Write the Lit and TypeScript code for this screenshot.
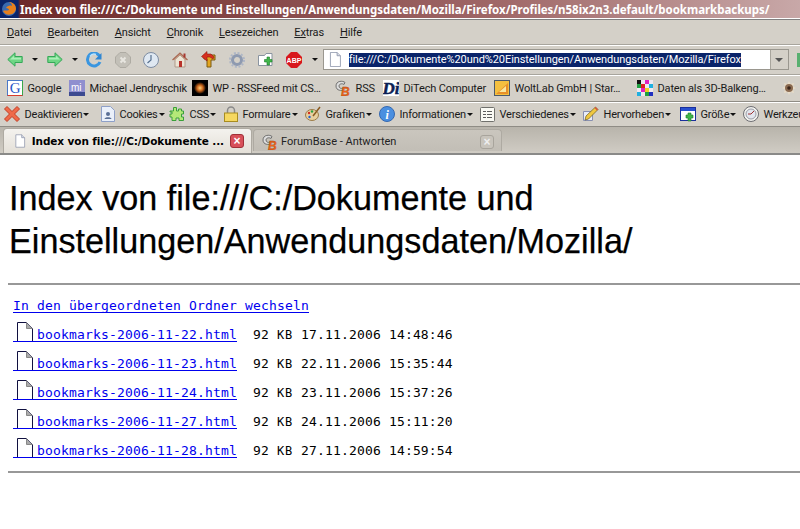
import { LitElement, html, css } from "lit";
import { customElement } from "lit/decorators.js";

const dd = html`<span class="dd"></span>`;
const page = (w = 16, h = 18) => html`<svg width=${w} height=${h} viewBox="0 0 16 18"><path d="M2.500.5h8l4 4v13h-12z" fill="#fff" stroke="#8a93a8"/><path d="M10.500.5v4h4" fill="#d8dce6" stroke="#8a93a8"/></svg>`;
const cb = html`<svg width="16" height="16" viewBox="0 0 16 16"><path d="M10 2.500C8 .5 1 .5 1 6c0 5 6 5 8 3.500L8 8C6 9 4 8 4 6s3-3 5-1.500z" fill="#ddd" stroke="#555" stroke-width=".8"/><text x="6" y="15.500" font-family="Liberation Sans" font-weight="700" font-style="italic" font-size="12" fill="#ec6518" stroke="#a33c10" stroke-width=".3">B</text></svg>`;

const arrow = (flip: boolean) => html`<svg width="16" height="15" viewBox="0 0 16 15" style=${flip ? "transform:scaleX(-1)" : ""}><path d="M.8 7.500 8 .8v3.700h7.200v6H8v3.700z" fill="#6ed684" stroke="#35a858"/><path d="M3 7.500 7 3.800v2h7v1.700H5z" fill="#aaefb8"/></svg>`;

const mi = html`<svg width="16" height="16" viewBox="0 0 16 16"><rect width="16" height="16" fill="#8f8fcf"/><rect y="12" width="16" height="4" fill="#3c4a90"/><text x="2" y="10.500" font-family="Liberation Sans" font-size="10" fill="#fff">mi</text></svg>`;

const navIcons = [
  html`<svg width="16" height="16" viewBox="0 0 16 16"><path d="M13.500 4A6.500 6.500 0 1 0 14 10" fill="none" stroke="#3a96e0" stroke-width="3"/><path d="M4 4.500A5 5 0 0 1 10 2.500" fill="none" stroke="#bfe4fb" stroke-width="1.500"/><path d="M15.500 1v6.500H9z" fill="#2f86d2"/></svg>`,
  html`<svg width="16" height="16" viewBox="0 0 16 16"><path d="M5 .5h6L15.500 5v6L11 15.500H5L.5 11V5z" fill="#c3c0b8" stroke="#aeaba3"/><path d="m5.500 5.500 5 5m0-5-5 5" stroke="#e8e6e0" stroke-width="2"/></svg>`,
  html`<svg width="16" height="16" viewBox="0 0 16 16"><circle cx="8" cy="8" r="7.500" fill="#dfe8f2" stroke="#7d8ca2"/><path d="M8 3v5l-3.500 3" fill="none" stroke="#56708e" stroke-width="1.200"/></svg>`,
  html`<svg width="16" height="16" viewBox="0 0 16 16"><path d="M.5 8 8 1l7.500 7" fill="#cf9a82" stroke="#a86a55" stroke-width="1.200"/><path d="M3 7.500 8 3l5 4.500V15H3z" fill="#ece4d4" stroke="#b09a8a"/><rect x="7" y="9" width="3" height="6" fill="#b8322a"/><rect x="11.500" y="1.500" width="2" height="4" fill="#a83830"/></svg>`,
  html`<svg width="16" height="17" viewBox="0 0 16 17"><path d="M6 16V8H3V4h11v5H10v7z" fill="#e3a520" stroke="#7a5a12"/><path d="M.5 5.500 6 .5V3h4l3 3-1 2-3-2H6v4z" fill="#d7301f" stroke="#8d1d12" stroke-width=".6"/></svg>`,
  html`<svg width="16" height="16" viewBox="0 0 16 16"><circle cx="8" cy="8" r="4.500" fill="none" stroke="#8e9ab0" stroke-width="3"/><circle cx="8" cy="8" r="7" fill="none" stroke="#aeb6c6" stroke-width="2" stroke-dasharray="2 1.700"/></svg>`,
  html`<svg width="16" height="15" viewBox="0 0 16 15"><path d="M.5 3.500h6l1.500-2h6v12H.5z" fill="#fff" stroke="#8a94a0"/><path d="M9 5h2.500v2.500H14V10h-2.500v3H9v-3H6.500V7.500H9z" fill="#41b64a" stroke="#1d7d2a" stroke-width=".6"/></svg>`,
];
const abp = html`<svg width="16" height="16" viewBox="0 0 16 16"><path d="M5 0h6l5 5v6l-5 5H5l-5-5V5z" fill="#d8171c"/><text x="8" y="10.800" text-anchor="middle" font-family="Liberation Sans" font-weight="700" font-size="7" fill="#fff">ABP</text></svg>`;

const bookmarks: [unknown, string, number][] = [
  [html`<svg width="16" height="16" viewBox="0 0 16 16"><rect x=".5" y=".5" width="15" height="15" fill="#fff" stroke="#4a78c8"/><path d="M15.500 .5v15" stroke="#38a84a"/><path d="M.5 15.500h15" stroke="#d83c2c"/><text x="8" y="13" text-anchor="middle" font-family="Liberation Serif" font-size="15" fill="#2a56c8">G</text></svg>`, "Google", 62],
  [mi, "Michael Jendryschik", 123],
  [html`<svg width="16" height="16" viewBox="0 0 16 16"><defs><radialGradient id="sun"><stop offset="0" stop-color="#ffd27a"/><stop offset=".5" stop-color="#c8641a"/><stop offset="1" stop-color="#000"/></radialGradient></defs><rect width="16" height="16" fill="#000"/><circle cx="8" cy="8" r="6" fill="url(#sun)"/></svg>`, "WP - RSSFeed mit CS…", 143],
  [cb, "RSS", 48],
  [html`<svg width="16" height="16" viewBox="0 0 16 16"><rect width="16" height="16" fill="#fff"/><text x="-.5" y="14" font-family="Liberation Serif" font-weight="700" font-style="italic" font-size="17" fill="#0c1f55" stroke="#0c1f55" stroke-width=".5">Di</text></svg>`, "DiTech Computer", 111],
  [html`<svg width="16" height="16" viewBox="0 0 16 16"><rect x=".5" y=".5" width="15" height="15" fill="#f4c040" stroke="#4c5a6a"/><path d="M2 14 14 3v11z" fill="#e89028"/><path d="M5 12 12 6v6z" fill="#f8e8a0"/></svg>`, "WoltLab GmbH | Star…", 143],
  [html`<svg width="16" height="16" viewBox="0 0 16 16"><rect width="16" height="16" fill="#f0e8f0"/><path d="M0 0h4v4H0z" fill="#111"/><path d="M8 0h4v4H8zM4 8h4v4H4z" fill="#e020c0"/><path d="M12 4h4v4h-4zM0 12h4v4H0z" fill="#20b0e0"/><path d="M4 4h4v4H4z" fill="#e02020"/><path d="M8 8h4v4H8z" fill="#f0d020"/><path d="M0 4h4v4H0zM8 12h4v4H8z" fill="#20a040"/><path d="M12 12h4v4h-4z" fill="#2030c0"/></svg>`, "Daten als 3D-Balkeng…", 144],
  [html`<svg width="16" height="16" viewBox="0 0 16 16"><path d="M8 1 9.500 4 13 3l-1 3.500L15 8l-3 1.500L13 13l-3.500-1L8 15l-1.500-3L3 13l1-3.500L1 8l3-1.500L3 3l3.500 1z" fill="#e8dcc8"/><circle cx="8" cy="8" r="4" fill="#8a6a50"/><circle cx="8" cy="8" r="1.800" fill="#3a2418"/></svg>`, "", 19],
];

const dev: [unknown, string, boolean, number][] = [
  [html`<svg width="16" height="16" viewBox="0 0 16 16"><path d="M3 .5 8 5.500l5-5L15.500 3l-5 5 5 5-2.500 2.500-5-5-5 5L.5 13l5-5-5-5z" fill="#ef6a4a" stroke="#c23c22"/></svg>`, "Deaktivieren", true, 97],
  [html`<svg width="14" height="16" viewBox="0 0 14 16"><path d="M.5.500h9l4 4v11H.5z" fill="#eaf0fa" stroke="#8ea0c8"/><circle cx="7" cy="8" r="2" fill="#5a6f95"/><path d="M3.500 13c0-2.500 7-2.500 7 0z" fill="#5a6f95"/></svg>`, "Cookies", true, 68],
  [html`<svg width="16" height="16" viewBox="0 0 16 16"><path d="M1 5h3.500V1.500h3V5h2V3h3v2h2v3h-2v3h2v3.500H10V12H7v2.500H3V11H1V8h2V6H1z" fill="#b4e878" stroke="#3aa03a"/></svg>`, "CSS", true, 55],
  [html`<svg width="14" height="16" viewBox="0 0 14 16"><path d="M3.500 7V4.500a3.500 3.500 0 0 1 7 0V7" fill="none" stroke="#8a8a8a" stroke-width="1.500"/><rect x=".5" y="7" width="13" height="8.500" fill="#f6d860" stroke="#a88c20"/></svg>`, "Formulare", true, 81],
  [html`<svg width="16" height="16" viewBox="0 0 16 16"><ellipse cx="7" cy="9" rx="6.500" ry="5.500" fill="#e8d0a0" stroke="#9c7c48"/><circle cx="4" cy="7" r="1.200" fill="#d03020"/><circle cx="7" cy="5.500" r="1.200" fill="#2aa040"/><circle cx="4.500" cy="11" r="1.200" fill="#2060d0"/><path d="M15 1 8 10" stroke="#8a5a20" stroke-width="1.500"/></svg>`, "Grafiken", true, 74],
  [html`<svg width="16" height="16" viewBox="0 0 16 16"><circle cx="8" cy="8" r="7.500" fill="#4a8fe0" stroke="#3468b0"/><text x="8" y="12.500" text-anchor="middle" font-family="Liberation Serif" font-weight="700" font-style="italic" font-size="12" fill="#fff">i</text></svg>`, "Informationen", true, 101],
  [html`<svg width="15" height="15" viewBox="0 0 15 15"><rect x=".5" y=".5" width="14" height="14" rx="1" fill="#fafaf4" stroke="#70706c"/><path d="M3 4.500h3m1 0h5M3 7.500h3m1 0h5M3 10.500h3m1 0h5" stroke="#5c5c5c"/></svg>`, "Verschiedenes", true, 103],
  [html`<svg width="16" height="16" viewBox="0 0 16 16"><path d="M.5 5.500h9v9h-9z" fill="#e8ecf8" stroke="#8890b0"/><path d="M2 14 3 10 12.500 1 15 3.500 5.500 13z" fill="#f0c840" stroke="#6a5a20" stroke-width=".7"/><path d="M12.500 1 15 3.500l-1 1L11.500 2z" fill="#d85040"/></svg>`, "Hervorheben", true, 97],
  [html`<svg width="16" height="15" viewBox="0 0 16 15"><rect x=".5" y=".5" width="15" height="13" fill="#fff" stroke="#1a2f9c"/><rect x="1" y="1" width="14" height="3" fill="#2850d0"/><path d="M8 6h3v2h2v3h-2v3H8v-3H6V8h2z" fill="#41b64a" stroke="#1d7d2a" stroke-width=".6"/></svg>`, "Größe", true, 63],
  [html`<svg width="16" height="16" viewBox="0 0 16 16"><circle cx="8" cy="8" r="7.500" fill="#f2f2ee" stroke="#6d6d72"/><circle cx="8" cy="8" r="5" fill="#e2e6ee" stroke="#9a9ca6"/><path d="M8 8 11 5M8 8H5" stroke="#a03030"/></svg>`, "Werkzeuge", false, 75],
];

const files = [
  ["bookmarks-2006-11-22.html", "17.11.2006 14:48:46"],
  ["bookmarks-2006-11-23.html", "22.11.2006 15:35:44"],
  ["bookmarks-2006-11-24.html", "23.11.2006 15:37:26"],
  ["bookmarks-2006-11-27.html", "24.11.2006 15:11:20"],
  ["bookmarks-2006-11-28.html", "27.11.2006 14:59:54"],
];

const menu: [string, string][] = [["D", "atei"], ["B", "earbeiten"], ["A", "nsicht"], ["C", "hronik"], ["L", "esezeichen"], ["Ex", "tras"], ["H", "ilfe"]];

@customElement("app-root")
export class AppRoot extends LitElement {
  static styles = css`
    :host { display: block; width: 800px; height: 529px; overflow: hidden; background: #fff; font-family: Roboto, sans-serif; }
    .title { height: 18px; display: flex; align-items: center; gap: 3px; padding-left: 1px; background: linear-gradient(90deg, #0a246a 0, #0a246a 18px, #6d2a2a 20px, #a06868 500px, #c8a8a8 800px); color: #fff; font: bold 11.500px "Noto Sans", sans-serif; letter-spacing: -.03px; white-space: nowrap; overflow: hidden; }
    .title svg { flex: none; }
    .bar { background: #d4d0c8; overflow: hidden; white-space: nowrap; font-family: Roboto, sans-serif; font-size: 11px; color: #1a1a1a; display: flex; align-items: center; }
    .menu { height: 25px; margin-top: 1px; gap: 16px; padding-left: 7px; border-top: 1px solid #808080; box-sizing: border-box; letter-spacing: -.15px; }
    .menu u { text-decoration-thickness: 1px; text-underline-offset: 1px; }
    .nav { height: 30px; border-top: 1px solid #a8a59d; box-shadow: inset 0 1px 0 #fff; box-sizing: border-box; padding-left: 7px; }
    .navi { display: flex; width: 28.600px; justify-content: center; flex: none; }
    .arrow { display: flex; flex: none; }
    .dd { width: 0; height: 0; border: 3px solid transparent; border-top: 3px solid #111; border-bottom: 0; display: inline-block; vertical-align: middle; flex: none; }
    .sp9 { margin: 0 9px; display: flex; }
    .sp92 { margin: 0 2px 0 9px; display: flex; }
    .sp3 { margin: 0 5px 0 3px; display: flex; }
    .url { flex: none; width: 466px; height: 21px; display: flex; align-items: center; background: #fff; border: 1px solid #9a978f; box-sizing: border-box; padding-left: 4px; gap: 7px; font-size: 11px; letter-spacing: -.08px; }
    .url mark { background: #0a246a; color: #fff; line-height: 14px; }
    .url .fill { flex: 1; }
    .urldd { width: 17px; align-self: stretch; background: #d4d0c8; border-left: 1px solid #a8a59d; display: flex; align-items: center; justify-content: center; }
    .urldd .dd { border-top-color: #555; border-width: 4px; border-bottom: 0; }
    .go { width: 10px; height: 14px; margin-left: 8px; background: #58b070; flex: none; }
    .bm { height: 27px; border-top: 1px solid #a8a59d; box-shadow: inset 0 1px 0 #fff; box-sizing: border-box; padding-left: 7px; letter-spacing: -.15px; }
    .bmi { display: flex; align-items: center; gap: 4.500px; flex: none; box-sizing: border-box; overflow: hidden; }
    .devi { display: flex; align-items: center; gap: 4.500px; flex: none; }
    .dev { height: 25px; border-top: 1px solid #8f8c85; box-shadow: inset 0 1px 0 #fff; box-sizing: border-box; padding-left: 4px; letter-spacing: -.2px; }
    .bmi svg, .devi svg { flex: none; }
    .dev .dd { margin-left: 1px; }
    .tabs { height: 29px; border-top: 1px solid #8f8c85; box-sizing: border-box; background: linear-gradient(#b8b4ab, #d0ccc4); display: flex; align-items: flex-end; padding-left: 3px; border-bottom: 2px solid #8a8a88; font-size: 11px; }
    .tab { display: flex; align-items: center; box-sizing: border-box; border: 1px solid #aeaaa2; border-bottom: 0; border-radius: 4px 4px 0 0; }
    .tab.on { width: 249px; height: 25px; background: linear-gradient(#f4f2ee, #e4e0d8); padding-left: 10px; gap: 6px; font: 700 10.500px "DejaVu Sans", sans-serif; letter-spacing: -.1px; }
    .tab.off { width: 249px; height: 22px; margin-left: 1px; background: linear-gradient(#cac6be, #c2beb6); padding: 2px 0 0 8px; gap: 3px; margin-bottom: 2px; color: #222; }
    .tab .t { flex: 1; white-space: nowrap; }
    .x { width: 14px; height: 14px; border-radius: 3px; display: flex; align-items: center; justify-content: center; color: #fff; font: bold 12px "Liberation Sans"; margin-right: 7px; flex: none; box-sizing: border-box; letter-spacing: 0; }
    .x.r { background: #d8505a; border: 1px solid #a03038; }
    .x.g { background: #c8c4bc; border: 1px solid #a8a49c; color: #eee; }
    .doc { padding: 0 0 0 8px; }
    h1 { margin: 22px 0 0 1px; font: 400 34.200px/43px "Liberation Sans", sans-serif; color: #000; -webkit-text-stroke: .25px #000; }
    .rule { height: 2px; background: #989898; margin: 20px 0 0; }
    .rule.end { margin-top: 4px; }
    .list { margin: 14px 0 0 5px; font: 13px/1 "DejaVu Sans Mono", monospace; letter-spacing: .17px; color: #000; }
    .row { display: flex; height: 29px; align-items: flex-start; white-space: pre; }
    .row.top { height: 23px; }
    a { color: #0000ee; text-decoration: none; border-bottom: 1px solid #0000ee; }
    .up { display: inline-block; line-height: 13px; }
    .f { display: inline-flex; align-items: flex-end; height: 19px; padding-left: 4px; }
    .f svg { margin-right: 4px; flex: none; }
    .f span { line-height: 14px; margin-bottom: -1px; }
    .meta { padding-top: 6px; }
    .kb { font-size: 12px; letter-spacing: .78px; }
  `;

  render() {
    return html`
      <div class="title">
        <svg width="16" height="16" viewBox="0 0 16 16"><circle cx="8" cy="8" r="7" fill="#3a6ab0"/><path d="M2 10A7 7 0 0 0 15 8C15 3 11 1 8 1c2 1 3 2 3 4-2-1-5 0-6 2 2 0 3 1 3 2-2 1-5 0-6 1z" fill="#e8801c"/></svg>
        <span>Index von file:///C:/Dokumente und Einstellungen/Anwendungsdaten/Mozilla/Firefox/Profiles/n58ix2n3.default/bookmarkbackups/</span>
      </div>
      <div class="bar menu">${menu.map(([a, b]) => html`<span><u>${a}</u>${b}</span>`)}</div>
      <div class="bar nav">
        <span class="arrow">${arrow(false)}</span><span class="sp9">${dd}</span>
        <span class="arrow">${arrow(true)}</span><span class="sp92">${dd}</span>
        ${navIcons.map((i) => html`<span class="navi">${i}</span>`)}
        <span class="navi">${abp}</span><span class="sp3">${dd}</span>
        <div class="url">${page(14, 15)}<mark>file:///C:/Dokumente%20und%20Einstellungen/Anwendungsdaten/Mozilla/Firefox</mark><span class="fill"></span><span class="urldd">${dd}</span></div>
        <span class="go"></span>
      </div>
      <div class="bar bm">${bookmarks.map(([i, t, w]) => html`<span class="bmi" style="width:${w}px">${i}${t ? html`<span>${t}</span>` : ""}</span>`)}</div>
      <div class="bar dev">${dev.map(([i, t, d, w]) => html`<span class="devi" style="width:${w}px">${i}<span>${t}${d ? dd : ""}</span></span>`)}</div>
      <div class="tabs">
        <div class="tab on">${page(14, 16)}<span class="t">Index von file:///C:/Dokumente ...</span><span class="x r">×</span></div>
        <div class="tab off">${cb}<span class="t">ForumBase - Antworten</span><span class="x g">×</span></div>
      </div>
      <div class="doc">
        <h1>Index von file:///C:/Dokumente und Einstellungen/Anwendungsdaten/Mozilla/</h1>
        <div class="rule"></div>
        <div class="list">
          <div class="row top"><a class="up" href="#">In den übergeordneten Ordner wechseln</a></div>
          ${files.map(([n, d]) => html`<div class="row"><a class="f" href="#"><svg width="16" height="19" viewBox="0 0 16 19"><path d="M.5 19V.5h9l6 6V19" fill="#fff" stroke="#101040"/><path d="M9.500.5v6h6" fill="#aaa" stroke="#888"/></svg><span>${n}</span></a><span class="meta">  92 <span class="kb">KB</span> ${d}</span></div>`)}
        </div>
        <div class="rule end"></div>
      </div>
    `;
  }
}
